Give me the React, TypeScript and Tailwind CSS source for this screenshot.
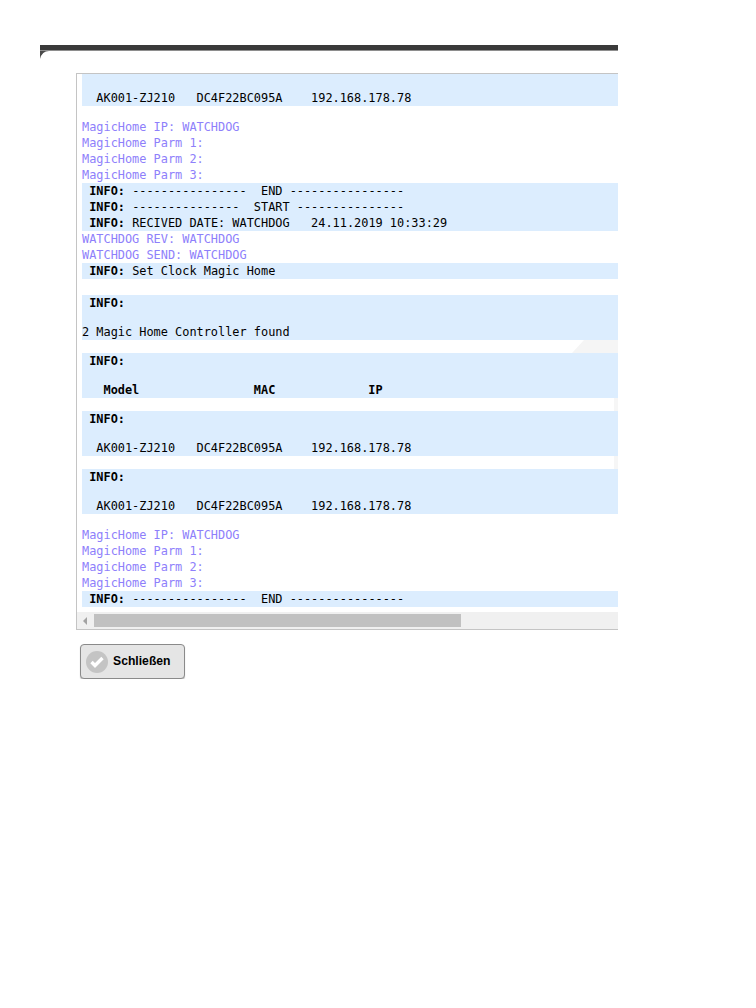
import React from 'react';

const Blue: React.FC<{ children: React.ReactNode }> = ({ children }) => (
  <div className="bg-[#dcedfe]">{children}</div>
);

const Line: React.FC<{ children?: React.ReactNode; className?: string }> = ({ children, className }) => (
  <div className={`h-4 leading-4 whitespace-pre ${className ?? ''}`}>{children}</div>
);

const Info: React.FC<{ children?: React.ReactNode }> = ({ children }) => (
  <Line>
    {' '}
    <b>INFO:</b> {children}
  </Line>
);

const Magic = ({ lines }: { lines: string[] }) => (
  <div className="text-[#8e80fb]">
    {lines.map((l) => (
      <Line key={l}>{l}</Line>
    ))}
  </div>
);

// white strip between blocks, the faint watermark behind the log shows through on the right
const Gap = ({ mark }: { mark?: 'edge' | 'diagonal' }) => (
  <div className="relative h-[13px]">
    {mark === 'edge' && <div className="absolute right-0 top-0 h-[13px] w-1 bg-[#f6f6f6]" />}
    {mark === 'diagonal' && (
      <div className="absolute right-0 top-0 h-[13px] w-[46px] bg-[#f5f5f5] [clip-path:polygon(12px_0,100%_0,100%_100%,0_100%)]" />
    )}
  </div>
);

const DEVICE = '  AK001-ZJ210   DC4F22BC095A    192.168.178.78';
const MAGIC = ['MagicHome IP: WATCHDOG', 'MagicHome Parm 1:', 'MagicHome Parm 2:', 'MagicHome Parm 3:'];

const TwoLine = ({ second, bold }: { second: string; bold?: boolean }) => (
  <Blue>
    <Info />
    <Line className={`mt-[13px] ${bold ? 'font-bold' : ''}`}>{second}</Line>
  </Blue>
);

export default function App() {
  return (
    <div className="min-h-[1008px] w-[756px] overflow-hidden bg-white pt-[45px] font-['DejaVu_Sans_Mono','Liberation_Mono',monospace] text-[11.9px] text-black">
      <div className="ml-10 w-[578px] overflow-hidden">
        <div className="h-[5px] bg-[#3a3a3a]" />
        <div className="h-px bg-[#8e8e8e]" />
        <div className="relative h-[22px] bg-white">
          <svg className="absolute left-0 top-0" width="10" height="8" viewBox="0 0 10 8">
            <path d="M0 0H9Q2 0 0 8z" fill="#4a4a4a" />
          </svg>
        </div>

        <div className="ml-9 border-l border-t border-[#c4c4c4] pl-[5px]">
          <Blue>
            <Line> </Line>
            <Line>{DEVICE}</Line>
          </Blue>
          <Gap />
          <Magic lines={MAGIC} />
          <Blue>
            <Info>----------------  END ----------------</Info>
            <Info>---------------  START ---------------</Info>
            <Info>RECIVED DATE: WATCHDOG   24.11.2019 10:33:29</Info>
          </Blue>
          <div className="text-[#8e80fb]">
            <Line>WATCHDOG REV: WATCHDOG</Line>
            <Line>WATCHDOG SEND: WATCHDOG</Line>
          </div>
          <Blue>
            <Info>Set Clock Magic Home</Info>
          </Blue>
          <div className="h-4" />
          <TwoLine second="2 Magic Home Controller found" />
          <Gap mark="diagonal" />
          <TwoLine bold second="   Model                MAC             IP" />
          <Gap mark="edge" />
          <TwoLine second={DEVICE} />
          <Gap mark="edge" />
          <TwoLine second={DEVICE} />
          <Gap />
          <Magic lines={MAGIC} />
          <Blue>
            <Info>----------------  END ----------------</Info>
          </Blue>
        </div>

        <div className="ml-9 border-b border-l border-[#c4c4c4]">
          <div className="h-[5px]" />
          <div className="flex h-[17px] bg-[#f0f0f0]">
            <div className="flex w-[17px] items-center justify-center">
              <svg width="5" height="8" viewBox="0 0 5 8">
                <path d="M4 0v8L0 4z" fill="#a3a3a3" />
              </svg>
            </div>
            <div className="h-[13px] w-[367px] self-center bg-[#c1c1c1]" />
          </div>
        </div>

        <button className="ml-10 mt-[14px] flex h-[35px] w-[105px] items-center rounded border border-[#8a8a8a] bg-[#e5e5e5] pl-[5px] font-['Liberation_Sans',Arial,sans-serif] text-[12.2px] font-bold shadow-[0_1px_1px_rgba(0,0,0,0.25)]">
          <span className="flex h-[22px] w-[22px] items-center justify-center rounded-full bg-[#c4c4c4]">
            <svg width="14" height="12" viewBox="0 0 14 12">
              <path d="M1.5 6 5 9.5 12.5 2" fill="none" stroke="#fff" strokeWidth="3.4" />
            </svg>
          </span>
          <span className="ml-[5px]">Schließen</span>
        </button>
      </div>
    </div>
  );
}
